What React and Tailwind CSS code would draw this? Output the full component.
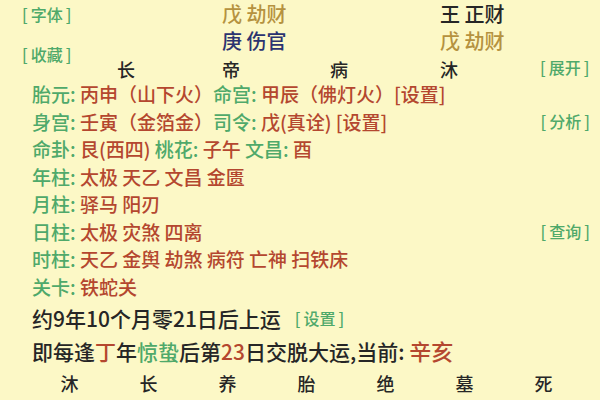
import React from 'react'

const G = 'text-[#4fa96a]'
const R = 'text-[#b4472f]'
const Y = 'text-[#b5923f]'
const N = 'text-[#2b3370]'
const K = 'text-[#262626]'

const pillars = [
  { top: '', mid: '', mark: '长' },
  { top: ['戊 劫财', Y], mid: ['庚 伤官', N], mark: '帝' },
  { top: '', mid: '', mark: '病' },
  { top: ['王 正财', K], mid: ['戊 劫财', Y], mark: '沐' }
]

const colW = ['w-[108px]', 'w-[108px]', 'w-[110px]', 'w-[100px]']

const stars = [
  ['年柱', '太极 天乙 文昌 金匮', null],
  ['月柱', '驿马 阳刃', null],
  ['日柱', '太极 灾煞 四离', '查询'],
  ['时柱', '天乙 金舆 劫煞 病符 亡神 扫铁床', null],
  ['关卡', '铁蛇关', null]
]

const stages = ['沐', '长', '养', '胎', '绝', '墓', '死']

// 绿色小按钮 [xx]
function Btn({ children, className = '' }) {
  return (
    <span className={`${G} text-[16px] ${className}`}>
      [<span className="mx-[3px]">{children}</span>]
    </span>
  )
}

function Row({ children, right }) {
  return (
    <div className="h-[27.5px] flex items-center justify-between pl-[32px] pr-[10px] whitespace-nowrap">
      <div>{children}</div>
      {right && <Btn>{right}</Btn>}
    </div>
  )
}

export default function App() {
  return (
    <div
      className="w-[600px] h-[400px] overflow-hidden bg-[#fcf8c6] text-[19px] leading-none font-medium"
      style={{ fontFamily: '"Noto Sans CJK SC", "Noto Sans", sans-serif' }}
    >
      {/* 四柱上半 */}
      <div className="flex h-[80px]">
        <div className="w-[114px] pl-[22px]">
          <div className="h-[27px] flex items-center"><Btn>字体</Btn></div>
          <div className="h-[28px] mt-[13px] flex items-center"><Btn>收藏</Btn></div>
        </div>
        {pillars.map((p, i) => (
          <div key={i} className={`${colW[i]} text-[20px]`}>
            <div className={`h-[27px] flex items-center ${p.top ? p.top[1] : ''}`}>{p.top ? p.top[0] : ''}</div>
            <div className={`h-[28px] flex items-center ${p.mid ? p.mid[1] : ''}`}>{p.mid ? p.mid[0] : ''}</div>
            <div className={`h-[27px] flex items-center text-[18px] ${K} ${i === 0 ? 'pl-[3px]' : ''}`}>{p.mark}</div>
          </div>
        ))}
        <div className="flex-1 flex flex-col">
          <div className="h-[55px]" />
          <div className="h-[27px] flex items-center"><Btn>展开</Btn></div>
        </div>
      </div>

      <Row>
        <span className={G}>胎元: </span>
        <span className={R}>丙申（山下火）</span>
        <span className={G}>命宫: </span>
        <span className={R}>甲辰（佛灯火）[设置]</span>
      </Row>
      <Row right="分析">
        <span className={G}>身宫: </span>
        <span className={R}>壬寅（金箔金）</span>
        <span className={G}>司令: </span>
        <span className={R}>戊(真诠) [设置]</span>
      </Row>
      <Row>
        <span className={G}>命卦: </span>
        <span className={R}>艮(西四) </span>
        <span className={G}>桃花: </span>
        <span className={R}>子午 </span>
        <span className={G}>文昌: </span>
        <span className={R}>酉</span>
      </Row>
      {stars.map(([k, v, r]) => (
        <Row key={k} right={r}>
          <span className={G}>{k}: </span>
          <span className={R}>{v}</span>
        </Row>
      ))}

      {/* 起运 */}
      <div className={`h-[32px] mt-[2px] flex items-center pl-[32px] whitespace-nowrap ${K}`}>
        <span className="text-[21px]">约9年10个月零21日后上运</span>
        <Btn className="ml-[14px]">设置</Btn>
      </div>
      <div className={`h-[32px] flex items-center pl-[32px] whitespace-nowrap text-[21px] ${K}`}>
        <div>
          即每逢<span className={R}>丁</span>年<span className={G}>惊蛰</span>后第<span className={R}>23</span>日交脱大运,当前: <span className={`${R} text-[22px]`}>辛亥</span>
        </div>
      </div>

      {/* 长生 */}
      <div className={`h-[33px] flex items-center pl-[30px] text-[18px] ${K}`}>
        {stages.map((s, i) => (
          <div key={i} className="w-[79px] text-center">{s}</div>
        ))}
      </div>
    </div>
  )
}
